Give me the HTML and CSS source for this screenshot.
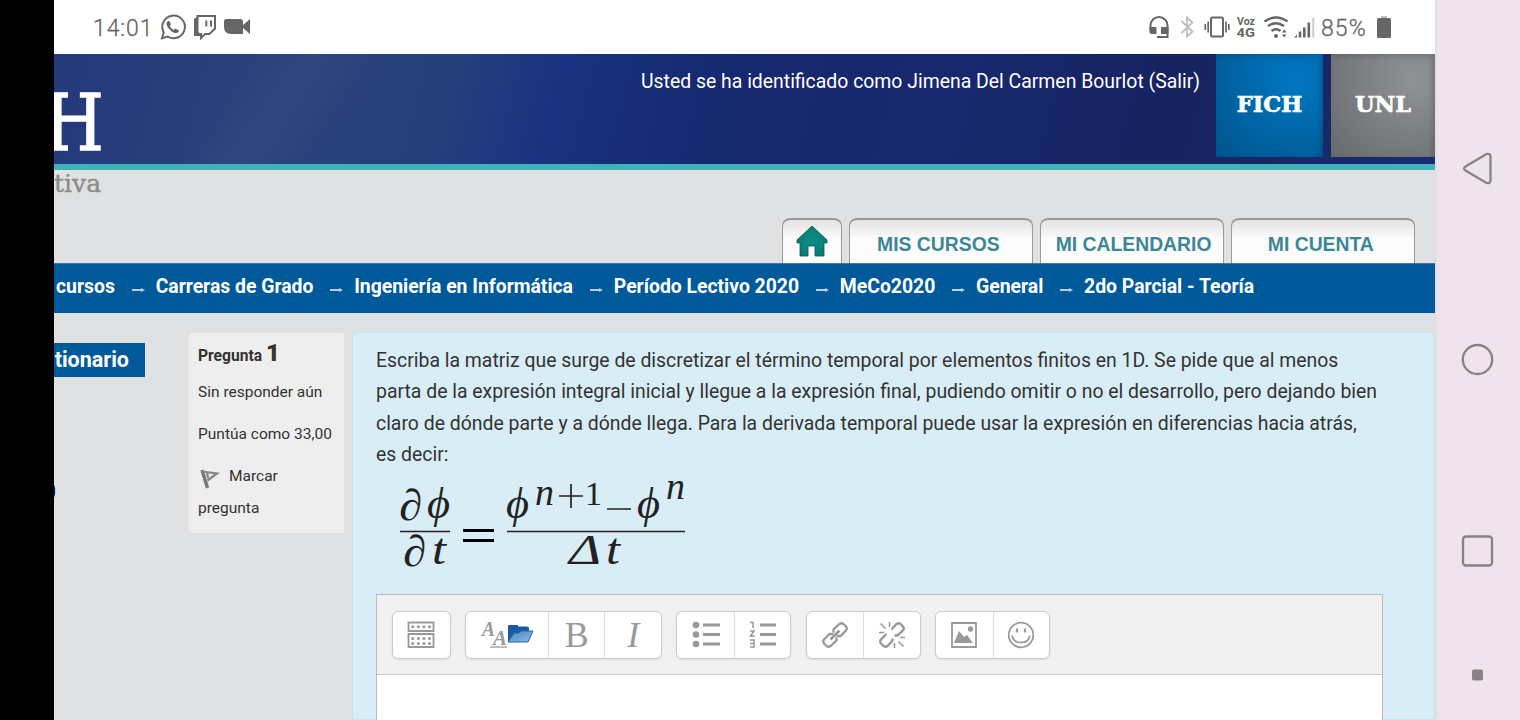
FILE: index.html
```html
<!DOCTYPE html>
<html lang="es">
<head>
<meta charset="utf-8">
<title>2do Parcial - Teoría</title>
<link rel="stylesheet" href="styles.css">
</head>
<body>
<div class="screen">
<main class="page">
  <header class="status">
    <span class="clock">14:01</span>
    <svg class="status-left" width="92" height="30" viewBox="158 12 92 30" fill="none" stroke="#666" stroke-width="2">
      <path d="M162 38.200l1.700-5.900A11.300 11.300 0 1 1 167.700 36.500z"/>
      <path d="M167.500 21.500c-2 2-.4 5.500 2.500 8.400s6.500 4.300 8.300 2.200c.8-1 .7-1.600-.2-2.100l-2.200-1.300c-.9-.4-1.400.7-2.100 1.200-1.500-.6-3.500-2.400-4-4 .5-.6 1.400-1.200 1-2l-1-2.200c-.5-1-1.500-.9-2.300-.2z" fill="#666" stroke="none"/>
      <path d="M197.500 16H215v12.500l-5.500 5.500H205l-4 4V34h-3.500z"/>
      <path d="M194 19l4-3v16l3 2v5l-1-3h-6z" fill="#666" stroke="none"/>
      <path d="M206.300 20.500v6M211 20.500v6"/>
      <path d="M226.500 19H240q3 0 3 3v3l7-6v15l-7-6v6h-12q-7 0-7-7v-5.500q0-2.500 2.500-2.500z" fill="#666" stroke="none"/>
    </svg>
    <span class="spacer"></span>
    <svg class="status-right" width="168" height="30" viewBox="1148 12 168 30" fill="none" stroke="#666" stroke-width="2">
      <path d="M1150.500 31v-5.500a8.500 8.500 0 0 1 17 0V37H1157"/>
      <path d="M1149.500 27h7v7h-4.500q-2.500 0-2.500-2.500zM1161 27h7.500v7H1161z" fill="#666" stroke="none"/>
      <path d="M1181.500 21l11 10.500-5.500 5V17.500l5.500 5-11 10.500" stroke="#bdbdbd" stroke-width="1.800"/>
      <rect x="1211" y="17.500" width="12" height="19" rx="1.500"/>
      <path d="M1208.200 21.500v11M1226 21.500v11M1205.300 24v6M1228.800 24v6" stroke-width="1.700"/>
      <text class="voz" x="1237" y="24.800" textLength="18" lengthAdjust="spacingAndGlyphs">Voz</text>
      <text class="lte" x="1236.500" y="36.800" textLength="18.500" lengthAdjust="spacingAndGlyphs">4G</text>
      <path d="M1264.500 21.500q11.500-8 23 0M1268 26q8-5.500 16 0M1271.500 31q4.500-3.500 9 0" stroke-width="2.300"/>
      <circle cx="1276" cy="36" r="2" fill="#666" stroke="none"/>
      <path d="M1282 32.500l2.300-3 2.300 3zM1282 34.500l2.300 3 2.300-3z" fill="#666" stroke="none"/>
      <path d="M1294 37.500l3-3v3z" fill="#666" stroke="none"/>
      <path d="M1300 37.500v-6M1304.300 37.500v-10M1308.800 37.500v-15" stroke-width="2.600"/>
      <path d="M1313.300 37.500v-20" stroke="#ccc" stroke-width="2"/>
    </svg>
    <span class="percent">85%</span>
    <svg class="battery" width="14" height="24" viewBox="0 0 14 24"><path d="M4 1h6v3H4z" fill="#bbb"/><rect y="3" width="14" height="20" rx="1.500" fill="#666"/></svg>
  </header>
  <section class="banner">
    <span class="logo-h">H</span>
    <span class="spacer"></span>
    <span class="login"><span class="condensed">Usted se ha identificado como Jimena Del Carmen Bourlot (Salir)</span></span>
    <span class="tile tile-fich"><span>FICH</span></span>
    <span class="tile tile-unl"><span>UNL</span></span>
  </section>
  <section class="subhead">
    <span class="tiva">tiva</span>
    <nav class="tabs">
      <a class="tab tab-home"><svg width="34" height="34" viewBox="0 0 34 34"><defs><radialGradient id="home"><stop offset="0" stop-color="#0c9088"/><stop offset="1" stop-color="#087c76"/></radialGradient></defs><path d="M17 1L2 15v3h3v13h8V21h7v10h9V18h3v-3z" fill="url(#home)" stroke="#0a5552" stroke-width=".8"/></svg></a>
      <a class="tab tab-courses"><span>MIS CURSOS</span></a>
      <a class="tab tab-calendar"><span>MI CALENDARIO</span></a>
      <a class="tab tab-account"><span>MI CUENTA</span></a>
    </nav>
  </section>
  <nav class="crumbs">
    <b>cursos</b><i></i><b>Carreras de Grado</b><i></i><b>Ingeniería en Informática</b><i></i><b>Período Lectivo 2020</b><i></i><b>MeCo2020</b><i></i><b>General</b><i></i><b>2do Parcial - Teoría</b>
  </nav>
  <section class="body">
    <aside class="side">
      <h2><span>Cuestionario</span></h2>
      <span class="cut">0</span>
    </aside>
    <aside class="info">
      <p class="number">Pregunta <b>1</b></p>
      <p>Sin responder aún</p>
      <p>Puntúa como 33,00</p>
      <p class="flag"><svg width="22" height="24" viewBox="0 0 22 24"><path d="M4 3l5.500 18" stroke="#777" stroke-width="3.400"/><path d="M4 4.500l15 2-9.500 7M9 5l1 6" fill="none" stroke="#858585" stroke-width="2.200"/></svg>Marcar<br>pregunta</p>
    </aside>
    <article class="question">
      <div class="text">
        <div>Escriba la matriz que surge de discretizar el término temporal por elementos finitos en 1D. Se pide que al menos</div>
        <div>parta de la expresión integral inicial y llegue a la expresión final, pudiendo omitir o no el desarrollo, pero dejando bien</div>
        <div>claro de dónde parte y a dónde llega. Para la derivada temporal puede usar la expresión en diferencias hacia atrás,</div>
        <div>es decir:</div>
      </div>
      <svg class="formula" width="310" height="120" viewBox="376 470 310 120">
        <g class="sym">
          <text x="399" y="519" font-size="44" textLength="23" lengthAdjust="spacingAndGlyphs">∂</text>
          <text x="403" y="564.500" font-size="44" textLength="23" lengthAdjust="spacingAndGlyphs">∂</text>
          <text x="427" y="516.500" font-size="44" textLength="23" lengthAdjust="spacingAndGlyphs">ϕ</text>
          <text x="506" y="516.500" font-size="44" textLength="23" lengthAdjust="spacingAndGlyphs">ϕ</text>
          <text x="637" y="516.500" font-size="44" textLength="23" lengthAdjust="spacingAndGlyphs">ϕ</text>
          <text x="432" y="563" font-size="44" textLength="14" lengthAdjust="spacingAndGlyphs">t</text>
          <text x="606" y="563" font-size="44" textLength="14" lengthAdjust="spacingAndGlyphs">t</text>
          <text x="535" y="503.500" font-size="37" textLength="19" lengthAdjust="spacingAndGlyphs">n</text>
          <text x="666" y="497.500" font-size="37" textLength="19" lengthAdjust="spacingAndGlyphs">n</text>
          <text x="569" y="563" font-size="42" textLength="32" lengthAdjust="spacingAndGlyphs">Δ</text>
          <text class="up" x="585" y="503.500" font-size="34">1</text>
        </g>
        <path d="M400 530.500h50M507 530.500h178M607 508h24M559 495h24M571 483v24" stroke="#222" stroke-width="1.700"/>
        <path d="M463 529.500h31M463 539.500h31" stroke="#000" stroke-width="3"/>
      </svg>
      <div class="editor">
        <div class="toolbar">
          <div class="group"><button class="single"><svg width="28" height="28" viewBox="0 0 28 28" fill="none" stroke="#999" stroke-width="1.800"><path d="M1.500 1.500h25v8.500h-25zM1.500 13h25v13h-25z"/><path d="M5.700 5.700h18M5.700 17.500h18M5.700 22.500h18" stroke-width="3" stroke-linecap="round" stroke-dasharray=".1 5.500"/></svg></button></div>
          <div class="group"><button class="wide"><svg width="54" height="30" viewBox="0 0 54 30"><text class="aa" x="2" y="16" font-size="21" textLength="13" lengthAdjust="spacingAndGlyphs">A</text><text class="aa" x="13" y="25" font-size="21" textLength="14" lengthAdjust="spacingAndGlyphs">A</text><path d="M10 27h17" stroke="#999" stroke-width="1.300"/><defs><linearGradient id="folder" x2="1" y2="1"><stop stop-color="#4887c3"/><stop offset="1" stop-color="#8ab9e6"/></linearGradient></defs><path d="M28 6q0-1 1-1h9v1.500h9q2 0 2 2v13H28z" fill="#1c5c9e"/><path d="M34 13h5l2-2h12l-5 11H28z" fill="url(#folder)" stroke="#2468a8" stroke-width="1"/></svg></button><button class="single bold">B</button><button class="single italic">I</button></div>
          <div class="group"><button class="single"><svg width="28" height="28" viewBox="0 0 28 28" stroke="#999" fill="#999"><path d="M11 4h17M11 13.500h17M11 23h17" stroke-width="3"/><g stroke="none"><circle cx="4" cy="4" r="3.300"/><circle cx="4" cy="13.500" r="3.300"/><circle cx="4" cy="23" r="3.300"/></g></svg></button><button class="single"><svg width="28" height="28" viewBox="0 0 28 28" fill="none" stroke="#999"><path d="M11 4h16M11 13.500h16M11 23h16" stroke-width="3"/><path d="M1 1.500h3V7M1 10h4L1.500 15H6M1 19h4v7H1M1 22.500h4" stroke-width="1.500"/></svg></button></div>
          <div class="group"><button class="single"><svg width="28" height="28" viewBox="0 0 28 28" fill="none" stroke="#999" stroke-width="2.300"><path d="M12.500 11.500v-3l6-5.500q2-1.500 4 0l2.500 2.500q1.500 2 0 4l-5.500 5.500h-4M15.500 16.500v3l-6 5.500q-2 1.500-4 0L3 22.500q-1.500-2 0-4L8.500 13h4"/><path d="M9.500 18.500l9-9" stroke-width="2.600"/></svg></button><button class="single"><svg width="28" height="28" viewBox="0 0 28 28" fill="none" stroke="#999" stroke-width="2.400"><path d="M13.500 8.500l5-5.500q2-1.500 4 0l2.500 2.500q1.500 2 0 4l-5.500 5h-3M8.500 13.500H8l-5 5q-1.500 2 0 4l2.500 2.500q2 1.500 4 0l5-5.500v-2"/><path d="M2.500 2.500l5 5M11.500 1v5M1 11.500h5M22 16.500h5M20.500 20.500l5 5M16.500 22v5" stroke-width="1.500"/></svg></button></div>
          <div class="group"><button class="single"><svg width="28" height="28" viewBox="0 0 28 28"><path d="M2 2h24v24H2z" fill="none" stroke="#999" stroke-width="1.800"/><circle cx="20.500" cy="8" r="2.700" fill="#999"/><path d="M4 22l5-12 5 6 3-2 6 8z" fill="#999"/></svg></button><button class="single"><svg width="28" height="28" viewBox="0 0 28 28" fill="none" stroke="#999" stroke-width="1.700"><circle cx="14" cy="14" r="12.300"/><path d="M5 14.500q1.500 7 9 7t9-7"/><path d="M10 7.500v4M18 7.500v4" stroke-width="2.200"/></svg></button></div>
        </div>
      </div>
    </article>
  </section>
</main>
<aside class="phone-nav">
  <svg width="36" height="720" viewBox="0 0 36 720" fill="none" stroke="#888187" stroke-width="2.300"><path d="M5.500 166.500l21-12.500q4-1 4 3v23q0 4-4 3l-21-12.500q-3-2 0-4z"/><ellipse cx="17.500" cy="359.500" rx="14.700" ry="14.500"/><rect x="3" y="536.500" width="29" height="29" rx="3"/><rect x="12" y="669.500" width="11" height="11" rx="2" fill="#888187" stroke="none"/></svg>
</aside>
</div>
</body>
</html>
```
FILE: styles.css
```css
* { box-sizing: border-box; }
body { margin: 0; background: #000; font-family: Roboto, "Liberation Sans", sans-serif; color: #333; }
.screen { display: flex; width: 1520px; height: 720px; padding-left: 54px; overflow: hidden; background: #000; }
.page { width: 1383px; height: 720px; background: #dfe1e3; overflow: hidden; display: flex; flex-direction: column; }
.phone-nav { width: 83px; background: #efe4ed; padding-left: 23px; }
svg { display: block; flex: none; }
.spacer { flex: 1; }

/* Phone status bar */
.status { height: 54px; flex: none; background: #fff; display: flex; align-items: center; padding: 0 44px 0 39px; margin-right: 2px; color: #666; font-size: 23px; }
.clock { width: 65px; letter-spacing: .9px; padding-top: 2px; font-weight: 300; -webkit-text-stroke: .3px #666; }
.percent { width: 61px; padding: 2px 0 0 5px; letter-spacing: 1.100px; font-weight: 300; -webkit-text-stroke: .3px #666; }
.voz, .lte { font: 700 10.500px Roboto, sans-serif; fill: #666; stroke: none; }
.lte { font-size: 13px; }

/* Site banner */
.banner { height: 116px; flex: none; margin-right: 2px; display: flex; border-bottom: 6px solid #3fb2ba; background: linear-gradient(125deg, transparent 14%, rgba(80,95,130,.2) 18%, transparent 23%), linear-gradient(105deg, #24397a 0, #2a417c 14%, #27407b 28%, #1c3281 36%, #172d76 43%, #16286e 50%, #17286d 65%, #16235f 80%, #1a2c70 100%); overflow: hidden; }
.logo-h { width: 60px; margin-left: -10px; color: #fff; font: 78px/80px "DejaVu Serif", serif; padding-top: 29px; transform: scaleX(.88); transform-origin: 0 0; -webkit-text-stroke: 1.500px #fff; }
.login { width: 575px; padding-top: 15px; color: #fff; font-size: 20px; line-height: 24px; white-space: nowrap; }
.condensed { display: inline-block; transform: scaleX(.97); transform-origin: 0 0; }
.tile { width: 107px; height: 103px; display: flex; align-items: center; justify-content: center; padding-bottom: 4px; color: #fff; font: 700 22.500px "DejaVu Serif", serif; box-shadow: inset -3px 2px 5px rgba(0,0,0,.15); }
.tile span { -webkit-text-stroke: .6px #fff; }
.tile-fich { background: radial-gradient(circle at 75% 25%, #0078c2, #00538b 100%); margin-right: 8px; }
.tile-unl { background: radial-gradient(circle at 80% 25%, #919296, #68696c 100%); width: 104px; }

/* Tabs */
.subhead { height: 93px; flex: none; display: flex; justify-content: space-between; }
.tiva { font: 25px/28px "DejaVu Serif", serif; color: #8c8c8c; -webkit-text-stroke: .4px #8c8c8c; }
.tabs { display: flex; gap: 7px; padding-top: 48px; margin-right: 22px; }
.tab { height: 45px; border: 1px solid #9a9a9a; border-top-width: 2px; border-bottom: 0; border-radius: 8px 8px 0 0; background: linear-gradient(#e2e2e2, #fcfcfc 45%); display: flex; align-items: center; justify-content: center; color: #3b8795; font: 700 20px "Liberation Sans", sans-serif; white-space: nowrap; padding-top: 5px; }
.tab span { transform: scaleX(.967); }
.tab-home { width: 60px; }
.tab-courses, .tab-calendar, .tab-account { width: 184px; }
.tab-courses { padding-right: 6px; }
.tab-calendar { padding-left: 3px; }
.tab-account { padding-right: 4px; }
.tab-home svg { margin-top: -4px; }

/* Breadcrumbs */
.crumbs { height: 50px; flex: none; margin-right: 2px; padding: 0 0 4px 2px; background: #005a9a; color: #fff; display: flex; align-items: center; font-size: 19.380px; white-space: nowrap; border-top: 1px solid #3c79aa; }
.crumbs i { width: 40.800px; height: 5px; margin-top: 7px; display: flex; align-items: center; padding-left: 17px; }
.crumbs i::before { content: ""; width: 9px; height: 1.500px; background: #b8cfe2; }
.crumbs i::after { content: ""; border: 2.500px solid transparent; border-left: 4px solid #b8cfe2; border-right: 0; }

/* Quiz */
.body { display: flex; padding-top: 19px; flex: 1; min-height: 0; }
.side { width: 134px; flex: none; }
.side h2 { margin: 11px 0 0; width: 91px; height: 34px; background: #005a9a; color: #fff; font-size: 21.500px; line-height: 33px; overflow: hidden; display: flex; justify-content: flex-end; padding-right: 16px; }
.cut { display: block; width: 2px; height: 24px; overflow: hidden; margin-top: 103px; font-size: 22px; line-height: 24px; direction: rtl; color: #000; }
.info { width: 157px; height: 202px; flex: none; background: #eee; border: 1px solid #e3e3e3; border-radius: 3px; padding: 4px 0 0 9px; font-size: 15.500px; line-height: 32px; white-space: nowrap; }
.info p { margin: 0 0 10px; }
.info .number { font-weight: 700; font-size: 15.600px; margin-bottom: 4px; }
.number b { font-size: 24px; }
.flag svg { display: inline-block; margin-right: 9px; vertical-align: -10px; height: 24px; }
.question { width: 1083px; margin-left: 7px; flex: none; background: #d9edf6; border: 1px solid #bce8f1; border-radius: 5px; padding: 12px 0 0 23px; }
.text { font-size: 20px; line-height: 31.400px; white-space: nowrap; height: 126px; width: 1040px; transform: scaleX(.97); transform-origin: 0 0; }
.formula { height: 120px; }
.sym { font-family: "Liberation Serif", "DejaVu Serif", serif; font-style: italic; fill: #222; }
.up { font-style: normal; }

/* Editor */
.editor { width: 1007px; height: 160px; margin-top: 3px; background: #fff; border: 1px solid #bbb; }
.toolbar { height: 80px; background: #f1f1f1; border-bottom: 1px solid #ccc; padding: 16px 15px; display: flex; gap: 14.400px; }
.group { height: 48px; border: 1px solid #ccc; border-radius: 6px; background: #fff; display: flex; box-shadow: 0 1px 2px rgba(0,0,0,.08); }
.group button { border: 0; padding: 0; background: none; display: flex; align-items: center; justify-content: center; }
.group button + button { border-left: 1px solid #ddd; }
.group .single { width: 56.500px; }
.group .wide { width: 82px; }
.group .bold, .group .italic { color: #999; font: 36px "Liberation Serif", serif; }
.group .italic { font-style: italic; }
.aa { font-family: "Liberation Serif", serif; font-style: italic; font-weight: 700; fill: #999; }
```
